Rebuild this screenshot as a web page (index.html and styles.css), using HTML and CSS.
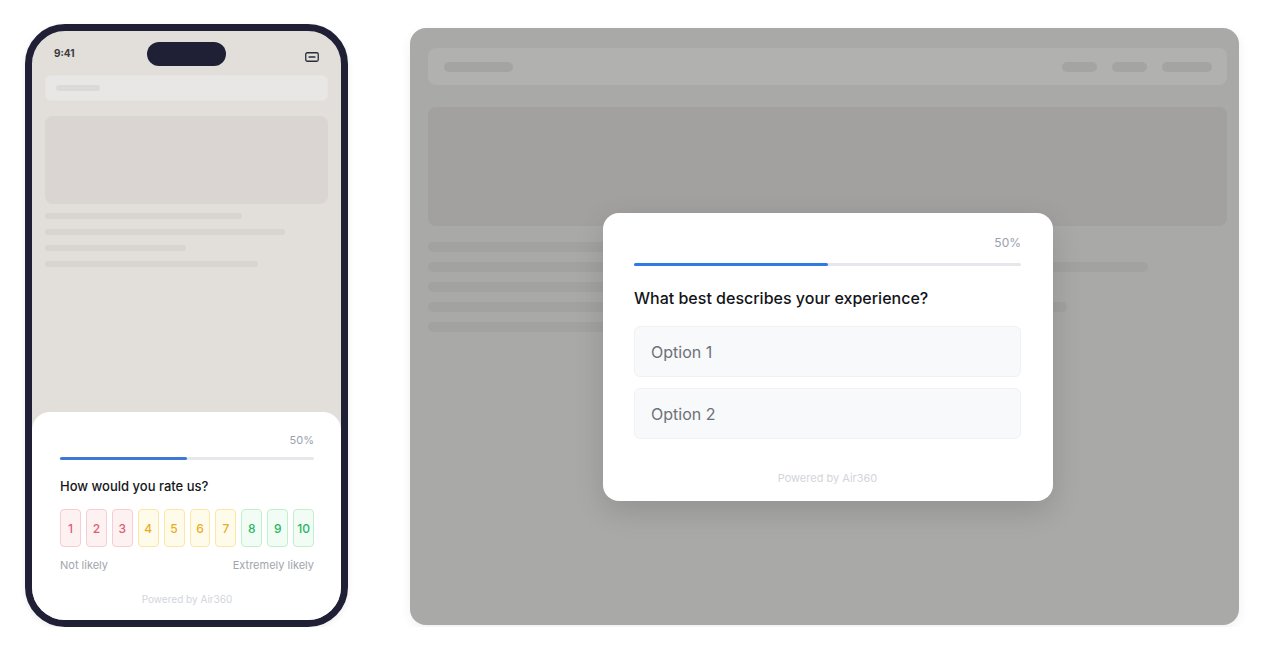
FILE: index.html
```html
<!DOCTYPE html>
<html>
<head>
  <title>Air360 Survey Preview</title>
  <link rel="stylesheet" href="styles.css">
</head>
<body>
  <div class="stage">

    <!-- mobile preview -->
    <div class="phone">
      <div class="status-bar">
        <span class="clock">9:41</span>
        <span class="island"></span>
        <svg class="battery" width="14" height="10" viewBox="0 0 14 10">
          <rect x="0.75" y="0.75" width="12.5" height="8.5" rx="1.5" fill="none" stroke="#2a2c3a" stroke-width="1.3"/>
          <rect x="3.5" y="4.3" width="7" height="1.5" rx="0.5" fill="#2a2c3a"/>
        </svg>
      </div>
      <div class="m-search"><span class="m-search-pill"></span></div>
      <div class="m-hero"></div>
      <div class="m-lines">
        <span class="m-line w1"></span>
        <span class="m-line w2"></span>
        <span class="m-line w3"></span>
        <span class="m-line w4"></span>
      </div>

      <div class="sheet">
        <div class="percent">50%</div>
        <div class="progress"><div class="progress-fill" style="width: 50%"></div></div>
        <div class="sheet-question">How would you rate us?</div>
        <div class="scale">
          <span class="score bad">1</span>
          <span class="score bad">2</span>
          <span class="score bad">3</span>
          <span class="score mid">4</span>
          <span class="score mid">5</span>
          <span class="score mid">6</span>
          <span class="score mid">7</span>
          <span class="score good">8</span>
          <span class="score good">9</span>
          <span class="score good">10</span>
        </div>
        <div class="scale-labels">
          <span>Not likely</span>
          <span>Extremely likely</span>
        </div>
        <div class="powered sheet-powered">Powered by Air360</div>
      </div>
    </div>

    <!-- desktop preview -->
    <div class="browser">
      <div class="d-nav">
        <span class="d-pill logo"></span>
        <div class="d-links">
          <span class="d-pill"></span>
          <span class="d-pill"></span>
          <span class="d-pill wide"></span>
        </div>
      </div>
      <div class="d-hero"></div>
      <div class="d-lines">
        <span class="d-line l1"></span>
        <span class="d-line l2"></span>
        <span class="d-line l3"></span>
        <span class="d-line l4"></span>
        <span class="d-line l5"></span>
      </div>

      <div class="modal">
        <div class="percent">50%</div>
        <div class="progress"><div class="progress-fill" style="width: 50%"></div></div>
        <div class="modal-question">What best describes your experience?</div>
        <div class="options">
          <div class="option">Option 1</div>
          <div class="option">Option 2</div>
        </div>
        <div class="powered modal-powered">Powered by Air360</div>
      </div>
    </div>

  </div>
</body>
</html>
```

FILE: styles.css
```css
  body {
    margin: 0;
    background-color: #fff;
    font-family: Inter, "Noto Sans", Arial, sans-serif;
  }

  .stage {
    display: flex;
    align-items: flex-start;
    gap: 62px;
    padding: 24px 0 0 25px;
  }

  /* phone */
  .phone {
    box-sizing: border-box;
    width: 323px;
    height: 603px;
    border: 7px solid #1f2036;
    border-radius: 40px;
    background-color: #e2dfdb;
    overflow: hidden;
    display: flex;
    flex-direction: column;
    box-shadow: 0 2px 6px rgba(0, 0, 0, 0.08);
  }

  .status-bar {
    display: grid;
    grid-template-columns: 1fr auto 1fr;
    align-items: center;
    padding: 11px 22px 0 22px;
  }

  .clock {
    font-size: 10px;
    font-weight: 700;
    color: #3a3a3a;
    margin-top: -2px;
  }

  .island {
    width: 79px;
    height: 24px;
    border-radius: 12px;
    background-color: #1f2036;
  }

  .battery {
    justify-self: end;
    margin-top: 6px;
  }

  .m-search {
    margin: 9px 13px 0 13px;
    height: 26px;
    border-radius: 6px;
    background-color: #e9e7e5;
    border: 1px solid #e6e3e0;
    box-sizing: border-box;
    display: flex;
    align-items: center;
    padding-left: 10px;
  }

  .m-search-pill {
    width: 44px;
    height: 6px;
    border-radius: 3px;
    background-color: #dcd9d6;
  }

  .m-hero {
    margin: 15px 13px 0 13px;
    height: 88px;
    border-radius: 8px;
    background-color: #dad4d2;
  }

  .m-lines {
    display: flex;
    flex-direction: column;
    gap: 10px;
    margin: 9px 13px 0 13px;
  }

  .m-line {
    height: 6px;
    border-radius: 3px;
    background-color: #d8d4d0;
  }

  .m-line.w1 { width: 197px; }
  .m-line.w2 { width: 240px; }
  .m-line.w3 { width: 141px; }
  .m-line.w4 { width: 213px; }

  .sheet {
    margin-top: auto;
    height: 208px;
    box-sizing: border-box;
    background-color: #fff;
    border-radius: 18px 18px 0 0;
    padding: 21px 27px 0 28px;
  }

  .percent {
    text-align: right;
    font-size: 11px;
    line-height: 14px;
    color: #9aa1ac;
  }

  .progress {
    height: 3px;
    margin-top: 10px;
    background-color: #e6e8ec;
    border-radius: 2px;
  }

  .progress-fill {
    height: 100%;
    background-color: #3b78d8;
    border-radius: 2px;
  }

  .sheet-question {
    margin-top: 17px;
    font-size: 13px;
    line-height: 18px;
    font-weight: 500;
    color: #15171c;
  }

  .scale {
    display: flex;
    gap: 5px;
    margin-top: 14px;
  }

  .score {
    flex: 1;
    height: 38px;
    box-sizing: border-box;
    border-radius: 4px;
    border: 1px solid;
    display: flex;
    align-items: center;
    justify-content: center;
    font-size: 12px;
    font-weight: 500;
  }

  .score.bad {
    background-color: #fdf1f2;
    border-color: #f6cdd2;
    color: #de5f6f;
  }

  .score.mid {
    background-color: #fffbeb;
    border-color: #fbe7a4;
    color: #e7ad1f;
  }

  .score.good {
    background-color: #f0fcf4;
    border-color: #c2efd0;
    color: #2bb463;
  }

  .scale-labels {
    display: flex;
    justify-content: space-between;
    margin-top: 11px;
    font-size: 11px;
    line-height: 14px;
    color: #a0a5ad;
  }

  .powered {
    text-align: center;
    color: #d2d5da;
  }

  .sheet-powered {
    margin-top: 21px;
    font-size: 10px;
    line-height: 12px;
  }

  /* desktop */
  .browser {
    position: relative;
    margin-top: 4px;
    box-sizing: border-box;
    width: 829px;
    height: 597px;
    border-radius: 16px;
    background-color: #a9a9a7;
    padding: 20px 12px 0 18px;
    box-shadow: 0 4px 12px rgba(0, 0, 0, 0.06);
  }

  .d-nav {
    height: 37px;
    border-radius: 8px;
    background-color: #b1b1b0;
    display: flex;
    align-items: center;
    justify-content: space-between;
    padding: 0 15px 0 16px;
  }

  .d-links {
    display: flex;
    gap: 15px;
  }

  .d-pill {
    width: 35px;
    height: 10px;
    border-radius: 5px;
    background-color: #a4a4a3;
  }

  .d-pill.logo { width: 69px; }
  .d-pill.wide { width: 50px; }

  .d-hero {
    margin-top: 22px;
    height: 119px;
    border-radius: 8px;
    background-color: #a2a1a0;
  }

  .d-lines {
    display: flex;
    flex-direction: column;
    gap: 10px;
    margin-top: 16px;
  }

  .d-line {
    height: 10px;
    border-radius: 5px;
    background-color: #a2a2a1;
  }

  .d-line.l1 { width: 480px; }
  .d-line.l2 { width: 720px; }
  .d-line.l3 { width: 520px; }
  .d-line.l4 { width: 639px; }
  .d-line.l5 { width: 420px; }

  /* survey popup over the page */
  .modal {
    position: absolute;
    left: 193px;
    top: 185px;
    width: 450px;
    height: 288px;
    box-sizing: border-box;
    background-color: #fff;
    border-radius: 16px;
    padding: 22px 32px 0 31px;
    box-shadow: 0 10px 30px rgba(0, 0, 0, 0.14);
  }

  .modal .percent {
    font-size: 12px;
    line-height: 16px;
  }

  .modal .progress {
    margin-top: 12px;
    background-color: #e5e7eb;
  }

  .modal .progress-fill {
    background-color: #2f7be6;
  }

  .modal-question {
    margin-top: 21px;
    font-size: 16px;
    line-height: 22px;
    font-weight: 500;
    color: #121418;
  }

  .options {
    display: flex;
    flex-direction: column;
    gap: 11px;
    margin-top: 17px;
  }

  .option {
    height: 51px;
    box-sizing: border-box;
    border: 1px solid #eff1f4;
    border-radius: 6px;
    background-color: #f8f9fb;
    display: flex;
    align-items: center;
    padding-left: 16px;
    font-size: 16px;
    color: #6d7178;
  }

  .modal-powered {
    margin-top: 32px;
    font-size: 11px;
    line-height: 14px;
  }
```
